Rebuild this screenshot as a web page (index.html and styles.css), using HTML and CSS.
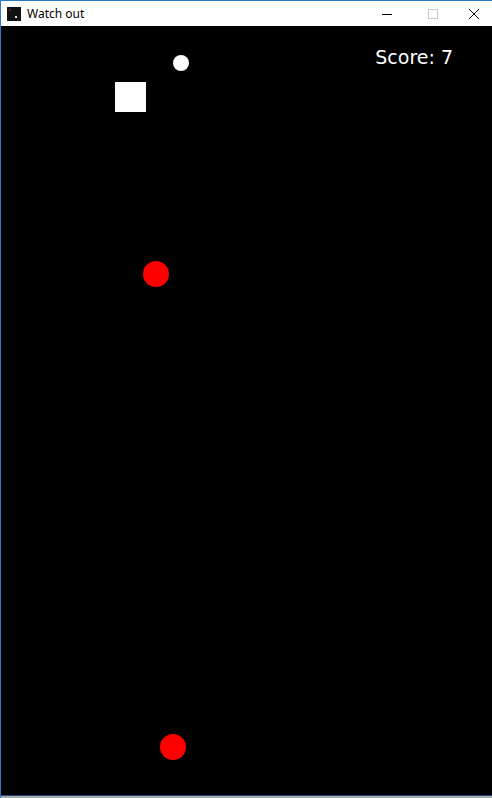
FILE: index.html
```html
<!DOCTYPE html>
<html>
<head>
<meta charset="utf-8">
<link rel="stylesheet" href="styles.css">
</head>
<body>
<div class="window">
  <div class="titlebar">
    <div class="app-icon">
      <span class="dot-red"></span>
      <span class="dot-white"></span>
    </div>
    <div class="title">Watch out</div>
    <div class="controls">
      <div class="ctl">
        <svg width="12" height="12" viewBox="0 0 12 12"><path d="M1 6.5h10" stroke="#000" stroke-width="1"/></svg>
      </div>
      <div class="ctl">
        <svg width="12" height="12" viewBox="0 0 12 12"><rect x="1.5" y="1.5" width="9" height="9" fill="none" stroke="#c8c8c8" stroke-width="1"/></svg>
      </div>
      <div class="ctl ctl-close">
        <svg width="12" height="12" viewBox="0 0 12 12"><path d="M1 1L11 11M11 1L1 11" stroke="#000" stroke-width="1"/></svg>
      </div>
    </div>
  </div>
  <div class="canvas">
    <div class="score">Score: 7</div>
    <div class="ball" style="left:172px;top:29px"></div>
    <div class="player" style="left:114px;top:56px"></div>
    <div class="enemy" style="left:142px;top:235px"></div>
    <div class="enemy" style="left:159px;top:708px"></div>
  </div>
  <div class="bottom-edge"></div>
</div>
</body>
</html>
```

FILE: styles.css
```css
html, body {
  margin: 0;
  padding: 0;
  background: #fff;
}
body {
  width: 492px;
  height: 798px;
  overflow: hidden;
}
.window {
  width: 492px;
  height: 798px;
  box-sizing: border-box;
  border-top: 1px solid #2a7bc4;
  border-left: 1px solid #2a7bc4;
  display: flex;
  flex-direction: column;
  background: #fff;
}
.titlebar {
  height: 25px;
  display: flex;
  align-items: center;
  background: #fff;
  flex: none;
}
.app-icon {
  width: 14px;
  height: 14px;
  background: #111;
  margin-left: 6px;
  position: relative;
  flex: none;
}
.dot-red {
  position: absolute;
  left: 2px;
  top: 2px;
  width: 2px;
  height: 2px;
  background: #6b1a1a;
}
.dot-white {
  position: absolute;
  left: 8px;
  top: 9px;
  width: 2px;
  height: 2px;
  background: #ddd;
}
.title {
  font-family: "Noto Sans", "Open Sans", sans-serif;
  font-size: 12px;
  color: #000;
  margin-left: 6px;
  line-height: 16px;
}
.controls {
  margin-left: auto;
  display: flex;
  height: 25px;
}
.ctl {
  width: 46px;
  height: 25px;
  display: flex;
  align-items: center;
  justify-content: center;
}
.ctl-close {
  width: 36px;
}
.canvas {
  position: relative;
  flex: 1;
  background: #000;
  overflow: hidden;
}
.bottom-edge {
  height: 2px;
  flex: none;
  border-top: 1px solid #23457a;
  background: #a9a9b0;
}
.score {
  position: absolute;
  right: 39px;
  top: 19px;
  font-family: "Comic Sans MS", "DejaVu Sans", sans-serif;
  font-size: 19px;
  color: #fff;
  line-height: 24px;
}
.ball {
  position: absolute;
  width: 16px;
  height: 16px;
  border-radius: 50%;
  background: #fff;
}
.player {
  position: absolute;
  width: 31px;
  height: 30px;
  background: #fff;
}
.enemy {
  position: absolute;
  width: 26px;
  height: 26px;
  border-radius: 50%;
  background: #f00;
}
```
